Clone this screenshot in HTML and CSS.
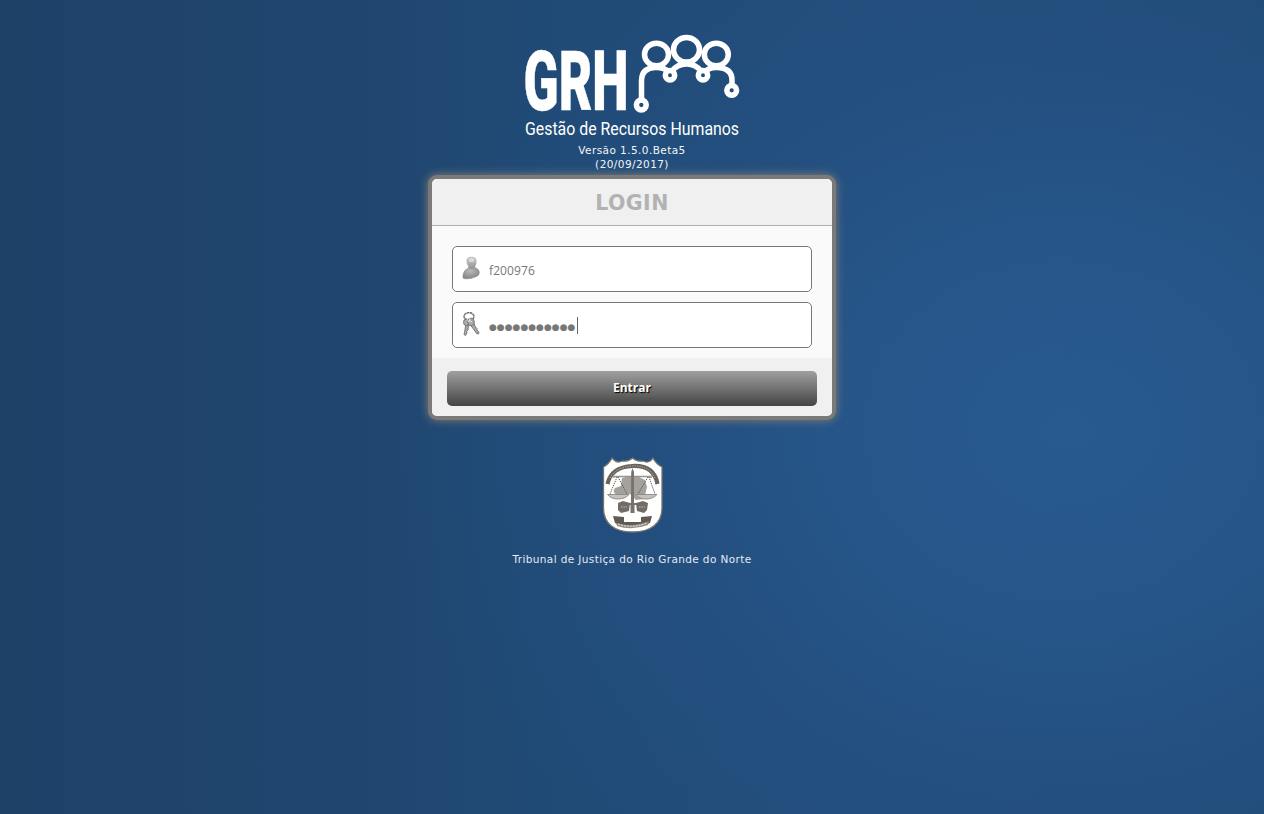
FILE: index.html
```html
<!DOCTYPE html>
<html lang="pt-BR">
<head>
<meta charset="utf-8">
<title>GRH - Login</title>
<link rel="stylesheet" href="styles.css">
</head>
<body>
<main class="page">
  <svg class="logo" width="220" height="106" viewBox="523 33 220 106" role="img" aria-label="GRH">
    <text class="logo-name" x="523.5" y="110" textLength="105" lengthAdjust="spacingAndGlyphs">GRH</text>
    <g class="logo-lines">
      <ellipse cx="656.5" cy="54.5" rx="12" ry="11.3"/>
      <ellipse cx="686.5" cy="49.7" rx="13" ry="12.3"/>
      <ellipse cx="716.3" cy="54.5" rx="12" ry="11.3"/>
      <path d="M641.5 101V80Q642 68 655 67.500Q664 67 669 72M671 72Q677 64 686.5 64T702 72M704 72Q710 67 717 67.500Q732 68 732 80V87"/>
      <circle cx="641.3" cy="105" r="4.9"/>
      <circle cx="670" cy="75.3" r="4.700"/>
      <circle cx="703" cy="75.3" r="4.700"/>
      <circle cx="731.7" cy="90.3" r="4.900"/>
    </g>
    <text class="logo-sub" x="525" y="135" textLength="214" lengthAdjust="spacingAndGlyphs">Gestão de Recursos Humanos</text>
  </svg>
  <p class="version"><span>Versão 1.5.0.Beta5</span><span>(20/09/2017)</span></p>

  <form class="card">
    <h1 class="card-title">LOGIN</h1>
    <div class="fields">
      <div class="field">
        <svg class="field-icon" width="18" height="24" viewBox="0 0 18 24">
          <defs>
            <radialGradient id="body" cx=".45" cy=".3" r=".7"><stop offset="0" stop-color="#b9b9b9"/><stop offset="1" stop-color="#858585"/></radialGradient>
            <linearGradient id="head" x2="0" y2="1"><stop offset="0" stop-color="#d2d2d2"/><stop offset="1" stop-color="#929292"/></linearGradient>
          </defs>
          <path fill="url(#body)" stroke="#8a8a8a" stroke-width=".6" d="M1 22Q.5 17 3 14.500Q5 12.500 8 11.500H12Q17.500 12.500 17.300 17Q17 20 13 21Q10 22.800 5 22.800Q2 23 1 22Z"/>
          <path fill="url(#head)" stroke="#999" stroke-width=".6" d="M5 4.500Q5.200 1.200 9.500 1.200T14 4.500Q14.500 8 13 10V11.500Q10 13.500 6.500 11.500V10Q4.800 8 5 4.500Z"/>
          <ellipse cx="9.500" cy="4" rx="3" ry="2" fill="#e2e2e2" opacity=".7"/>
        </svg>
        <span class="value">f200976</span>
      </div>
      <div class="field">
        <svg class="field-icon" width="18" height="24" viewBox="0 0 18 24">
          <ellipse cx="7" cy="4.500" rx="4.900" ry="3.900" fill="none" stroke="#707070" stroke-width="1.500" stroke-dasharray="2.600 .4"/>
          <g fill="#aaa" stroke="#707070" stroke-width=".9">
            <path d="M3.800 12L6.500 13 6 18 4.500 19.500 5 21 3.500 23.500 2 22.500 2.700 19.500Z"/>
            <path d="M8 12.500L11.500 10.500 13.500 15 15 16.500 14.800 18 17 20 16.500 22 14.500 21.500 11.500 17Z"/>
            <ellipse cx="4.500" cy="10.300" rx="3" ry="3.300"/>
            <ellipse cx="9" cy="10" rx="3.300" ry="3.900"/>
          </g>
          <path d="M5 7L7 10L8 6M7 8L10 10" fill="none" stroke="#eee" stroke-width=".8"/>
        </svg>
        <span class="dots">●●●●●●●●●●●</span><span class="caret"></span>
      </div>
    </div>
    <div class="actions"><button class="submit" type="button">Entrar</button></div>
  </form>

  <svg class="crest" width="62" height="78" viewBox="602 456 62 78" aria-hidden="true">
    <path d="M612 458Q617 464 622 461Q628 462 632.500 458Q637 462 643 461Q649 464 653 458Q656 464 662 467V508C662 524 650 532 632.500 532S603.500 524 603.500 508V467Q609 464 612 458Z" fill="#fff" stroke="#77746f" stroke-width="1.300"/>
    <path d="M607.500 484Q611 467 632.500 466T657.500 484" fill="none" stroke="#69635b" stroke-width="4.200"/>
    <path d="M610 478Q616 467 632.500 466T655 478" fill="none" stroke="#c0bbb4" stroke-width=".9" stroke-dasharray="1.200 1.200"/>
    <path d="M622 478L631 476 639 477 645 480 647 487 644 499 636 500 630 494 618 495Q611 493 615 488L621 486Z" fill="#a5a29e"/>
    <path d="M615 476.500H650M614 475.500V478M651 475.500V478" stroke="#99948e" stroke-width="1.700"/>
    <path d="M617 477L610 494M618 477L627 494M648 477L638 494M649 477L655 494" fill="none" stroke="#514d48" stroke-width="1" stroke-dasharray="1.200 1"/>
    <path d="M607.500 494.500H629Q625 499 618 499T607.500 494.500ZM636 494.500H657Q653 499 646 499T636 494.500Z" fill="#c5c2be" stroke="#8b8781" stroke-width=".9"/>
    <path d="M631.200 472L632.500 468L634 472V503H637V505H634.500V513H630.500V505H628V503H631Z" fill="#77726b"/>
    <path d="M618 503L623 501 630 503 629 511 621 513 618 510ZM636 503L643 501 648 503 647 510 644 513 637 511Z" fill="#716c65"/>
    <path d="M621 507H627M639 507H645" stroke="#c4bfb8" stroke-width="1" stroke-dasharray="1.500 1"/>
    <path d="M613 516L624 517V522H641V517L652 516 650 523Q633 531 615 523Z" fill="#605a52"/>
    <path d="M616 523Q632 528 649 521L648 525Q632 531 617 526Z" fill="#918b83"/>
    <path d="M618 524Q632 529 647 523" fill="none" stroke="#ddd9d3" stroke-width="1.200" stroke-dasharray="2 1"/>
  </svg>
  <p class="court">Tribunal de Justiça do Rio Grande do Norte</p>
</main>
</body>
</html>
```
FILE: styles.css
```css
* { box-sizing: border-box; }
body {
  margin: 0;
  font-family: Verdana, "DejaVu Sans", sans-serif;
  background:
    radial-gradient(ellipse 680px 580px at 1070px 430px, rgba(40,90,144,.95) 0%, rgba(39,87,140,.85) 35%, rgba(36,80,130,.6) 65%, rgba(34,76,122,0) 100%),
    linear-gradient(90deg, #1e4168 0%, #20466f 28%, #204b77 45%, #224d7a 70%, #204b76 100%);
}
.page {
  height: 814px;
  padding-top: 33px;
  display: flex;
  flex-direction: column;
  align-items: center;
  overflow: hidden;
}
.logo { display: block; margin-left: 2px; flex: none; overflow: visible; }
.logo-name { font: 900 83px Roboto, sans-serif; fill: #fff; stroke: #fff; stroke-width: .5; }
.logo-sub { font: 400 19px Roboto, sans-serif; fill: #fff; }
.logo-lines { fill: none; stroke: #fff; stroke-width: 5.500; }
.version, .court { margin: 0; color: #f4f6f8; font-size: 10.500px; line-height: 14px; }
.version { display: flex; flex-direction: column; align-items: center; margin-top: 4px; letter-spacing: .42px; }
.card {
  width: 408px;
  height: 245px;
  margin-top: 4px;
  border: 4px solid #7b7a78;
  border-radius: 9px;
  background: #fafafa;
  box-shadow: 0 0 10px #857f76;
  display: flex;
  flex-direction: column;
  overflow: hidden;
  flex: none;
}
.card-title {
  margin: 0;
  height: 47px;
  border-bottom: 1px solid #b0b0b0;
  background: #f0f0f0;
  color: #b2b2b2;
  font-size: 20.500px;
  letter-spacing: .4px;
  line-height: 48px;
  text-align: center;
}
.fields { height: 132px; padding: 20px 20px 0; display: flex; flex-direction: column; gap: 10px; }
.field {
  height: 46px;
  flex: none;
  padding-left: 9px;
  border: 1px solid #777;
  border-radius: 5px;
  background: #fff;
  color: #777;
  display: flex;
  align-items: center;
}
.field-icon { margin: 0 9px 3px 0; }
.value { font: 12px/20px "Open Sans", "Noto Sans", sans-serif; padding-top: 4px; letter-spacing: .1px; }
.dots { font: 9px/20px "DejaVu Sans", sans-serif; letter-spacing: -.01px; padding-top: 3px; }
.dots { width: 88px; letter-spacing: 0; white-space: nowrap; }
.caret { width: 1px; height: 17px; background: #666; }
.actions { flex: 1; padding: 13px 15px 0; background: #f0f0f0; }
.submit {
  display: block;
  width: 370px;
  height: 35px;
  padding: 0 0 2px;
  border: 0;
  border-radius: 5px;
  background: linear-gradient(#a0a0a0, #444);
  color: #fff;
  font: bold 12px "Open Sans", "Noto Sans", sans-serif;
  text-shadow: 1px 1px 1px #000;
}
.crest { display: block; margin: 36px 0 0 1px; flex: none; }
.court { margin-top: 18px; letter-spacing: .38px; color: #e4eaf0; }
```
